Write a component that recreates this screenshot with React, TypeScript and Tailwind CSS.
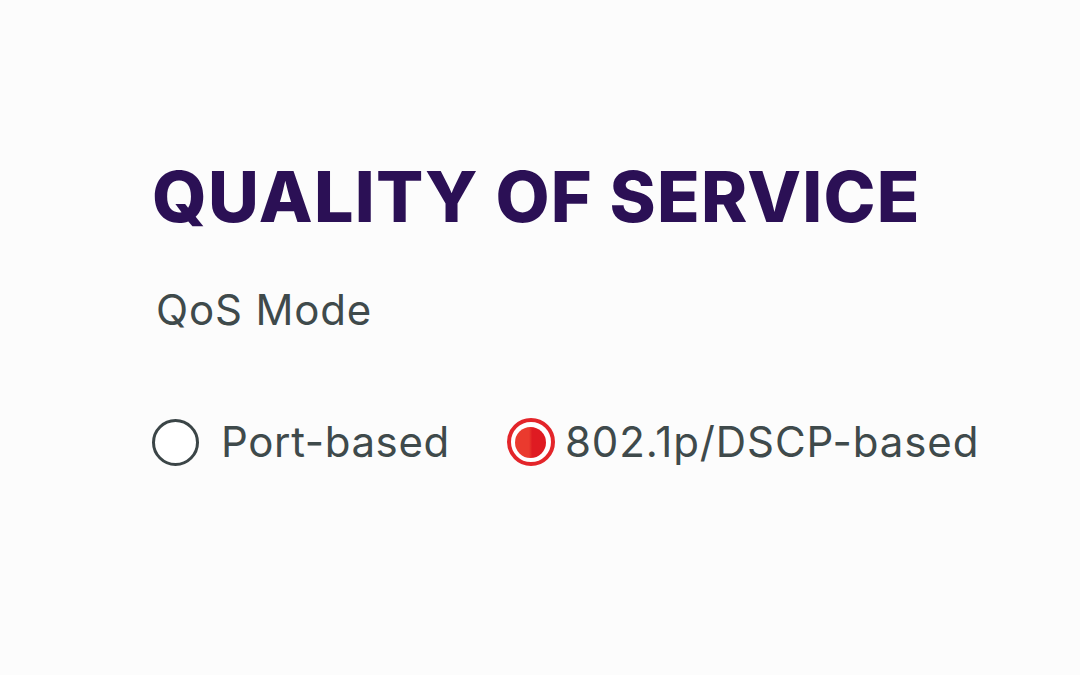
const Radio = ({ checked }: { checked?: boolean }) =>
  checked ? (
    <span className="relative flex h-12 w-12 shrink-0 items-center justify-center rounded-full border-[4px] border-[#e3252a] bg-white">
      <span className="h-[31px] w-[31px] rounded-full bg-gradient-to-r from-[#ea3a2e] from-45% to-[#df1b22] to-55%" />
    </span>
  ) : (
    <span className="h-[47px] w-[47px] shrink-0 rounded-full border-[3px] border-[#3b4547] bg-white" />
  );

export default function App() {
  return (
    <div className="h-[675px] w-[1080px] bg-[#fcfcfc] font-['Inter',sans-serif]">
      <div className="flex flex-col pl-[152px] pt-[162px]">
        <h1 className="text-[70px] font-extrabold leading-none tracking-[0.018em] text-[#2b1055]">
          QUALITY OF SERVICE
        </h1>
        <p className="mt-[57px] pl-[4px] text-[42px] leading-none tracking-[0.02em] text-[#3f4a4b]">
          QoS Mode
        </p>
        <div className="mt-[87px] flex items-center text-[42px] leading-none text-[#3f4a4b]">
          <label className="flex items-center gap-[22px]">
            <Radio />
            <span className="tracking-[0.015em]">Port-based</span>
          </label>
          <label className="ml-[57px] flex items-center gap-[10px]">
            <Radio checked />
            <span className="tracking-[0.022em]">802.1p/DSCP-based</span>
          </label>
        </div>
      </div>
    </div>
  );
}
